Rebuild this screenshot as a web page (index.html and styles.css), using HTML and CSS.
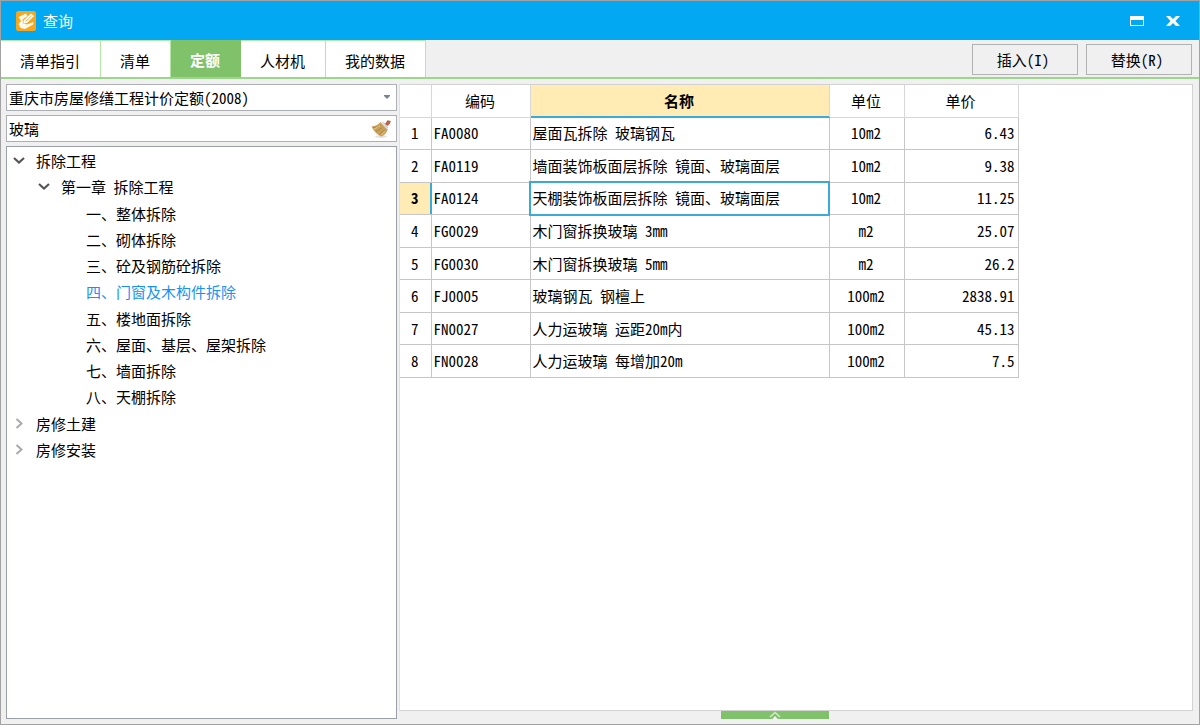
FILE: index.html
```html
<!DOCTYPE html>
<html lang="zh-CN">
<head>
<meta charset="utf-8">
<title>查询</title>
<link rel="stylesheet" href="styles.css">
</head>
<body>
<div class="window">
  <header class="titlebar">
    <svg class="logo" viewBox="0 0 20 20" aria-hidden="true">
      <rect width="20" height="20" rx="2.500" fill="#f9a61c"/>
      <path d="M2.500 6 10 2.500 11.500 5 6.500 8.500 7 12.500 11 13.500 17.500 11 17 13.500 9 18 4.500 17 2.500 13 5 10z" fill="#fffaf0"/>
      <path d="M7.500 9.500 15 2.500 18 5 11 12 7.500 12.500z" fill="#fff"/>
      <path d="M9.500 10.500 15.500 5" stroke="#f3b450" stroke-width="1" fill="none"/>
    </svg>
    <h1 class="title">查询</h1>
    <button class="winbtn" type="button" aria-label="最大化">
      <svg width="16" height="16" viewBox="0 0 16 16"><path d="M1 3h14v10H1zM2 7v5h12V7z" fill="#fff" fill-rule="evenodd"/></svg>
    </button>
    <button class="winbtn" type="button" aria-label="关闭">
      <svg width="16" height="16" viewBox="0 0 16 16"><path d="M1 3h4l3 3 3-3h4L10.500 8l4.500 5h-4L8 10l-3 3H1l4.500-5z" fill="#fff"/></svg>
    </button>
  </header>

  <div class="toolbar">
    <nav class="tabs" role="tablist">
      <button class="tab" role="tab" type="button">清单指引</button>
      <button class="tab" role="tab" type="button">清单</button>
      <button class="tab tab-active" role="tab" type="button" aria-selected="true">定额</button>
      <button class="tab" role="tab" type="button">人材机</button>
      <button class="tab" role="tab" type="button">我的数据</button>
    </nav>
    <div class="actions">
      <button class="action" type="button">插入(I)</button>
      <button class="action" type="button">替换(R)</button>
    </div>
  </div>

  <div class="content">
    <aside class="sidebar">
      <div class="field">
        <select class="control" aria-label="定额库"><option>重庆市房屋修缮工程计价定额(2008)</option></select>
        <svg class="arrow" width="8" height="5" viewBox="0 0 8 5" aria-hidden="true"><path d="M1 0h6v1L4 4 1 1z" fill="#7d8190"/></svg>
      </div>
      <div class="field">
        <input class="control" type="text" value="玻璃" aria-label="搜索">
        <button class="clear" type="button" aria-label="清空">
          <svg width="22" height="20" viewBox="0 0 22 20">
            <ellipse cx="11" cy="17.500" rx="6" ry="1.500" fill="#e2e2e2"/>
            <path d="M15 5 17.500 1.200 20.800 2 20 4.500 17.500 7z" fill="#bd6248"/>
            <path d="M1.500 7.500Q7 7 10.500 3L17.500 11Q16 15.500 11.500 17.500 5 15 1.500 7.500z" fill="#c8a05a"/>
            <path d="M3 8.500 9 8M6 12.500 12 9M9.500 15.500 14.500 11" stroke="#a57f40" stroke-width=".8"/>
            <path d="M4 10 10 7M11 16 15 12.500" stroke="#e4c583" stroke-width="1"/>
            <path d="M11.500 2.500 14 3.500 18 8.500 18 11.500z" fill="#a5b2bb"/>
            <path d="M12.500 3 18 10" stroke="#e4ebef" stroke-width="1"/>
          </svg>
        </button>
      </div>
      <div class="treebox">
        <ul class="tree" role="tree">
          <li class="node level1" role="treeitem" aria-expanded="true"><svg class="chev" viewBox="0 0 12 12"><path d="M1 3 6 7.500l5-4.500" stroke="#555" stroke-width="2.200" fill="none"/></svg>拆除工程</li>
          <li class="node level2" role="treeitem" aria-expanded="true"><svg class="chev" viewBox="0 0 12 12"><path d="M1 3 6 7.500l5-4.500" stroke="#555" stroke-width="2.200" fill="none"/></svg>第一章 拆除工程</li>
          <li class="node level3" role="treeitem">一、整体拆除</li>
          <li class="node level3" role="treeitem">二、砌体拆除</li>
          <li class="node level3" role="treeitem">三、砼及钢筋砼拆除</li>
          <li class="node level3 selected" role="treeitem" aria-selected="true">四、门窗及木构件拆除</li>
          <li class="node level3" role="treeitem">五、楼地面拆除</li>
          <li class="node level3" role="treeitem">六、屋面、基层、屋架拆除</li>
          <li class="node level3" role="treeitem">七、墙面拆除</li>
          <li class="node level3" role="treeitem">八、天棚拆除</li>
          <li class="node level1" role="treeitem" aria-expanded="false"><svg class="chev" viewBox="0 0 12 12"><path d="M3.500 1 8.500 5.500l-5 4.500" stroke="#aaa" stroke-width="2" fill="none"/></svg>房修土建</li>
          <li class="node level1" role="treeitem" aria-expanded="false"><svg class="chev" viewBox="0 0 12 12"><path d="M3.500 1 8.500 5.500l-5 4.500" stroke="#aaa" stroke-width="2" fill="none"/></svg>房修安装</li>
        </ul>
      </div>
    </aside>

    <main class="main">
      <div class="grid">
        <table class="table">
          <colgroup><col class="c-no"><col class="c-code"><col class="c-name"><col class="c-unit"><col class="c-price"></colgroup>
          <thead>
            <tr><th></th><th>编码</th><th class="sorted">名称</th><th>单位</th><th>单价</th></tr>
          </thead>
          <tbody>
            <tr><th>1</th><td>FA0080</td><td>屋面瓦拆除 玻璃钢瓦</td><td class="unit">10m2</td><td class="price">6.43</td></tr>
            <tr><th>2</th><td>FA0119</td><td>墙面装饰板面层拆除 镜面、玻璃面层</td><td class="unit">10m2</td><td class="price">9.38</td></tr>
            <tr><th class="current">3</th><td>FA0124</td><td class="focus">天棚装饰板面层拆除 镜面、玻璃面层</td><td class="unit">10m2</td><td class="price">11.25</td></tr>
            <tr><th>4</th><td>FG0029</td><td>木门窗拆换玻璃 3mm</td><td class="unit">m2</td><td class="price">25.07</td></tr>
            <tr><th>5</th><td>FG0030</td><td>木门窗拆换玻璃 5mm</td><td class="unit">m2</td><td class="price">26.2</td></tr>
            <tr><th>6</th><td>FJ0005</td><td>玻璃钢瓦 钢檀上</td><td class="unit">100m2</td><td class="price">2838.91</td></tr>
            <tr><th>7</th><td>FN0027</td><td>人力运玻璃 运距20m内</td><td class="unit">100m2</td><td class="price">45.13</td></tr>
            <tr><th>8</th><td>FN0028</td><td>人力运玻璃 每增加20m</td><td class="unit">100m2</td><td class="price">7.5</td></tr>
          </tbody>
        </table>
      </div>
      <button class="handle" type="button" aria-label="展开">
        <svg width="12" height="8" viewBox="0 0 12 8"><path d="M1 6 6 1.500 11 6" stroke="#d2ebca" stroke-width="1.500" fill="none"/><path d="M3.500 8 6 5l2.500 3z" fill="#fff"/></svg>
      </button>
    </main>
  </div>
</div>
</body>
</html>
```

FILE: styles.css
```css
* { box-sizing: border-box; }
body {
  margin: 0;
  color: #000;
  font: 15px/20px "Noto Sans Mono CJK SC", "Noto Sans CJK SC", sans-serif;
}
button, input, select { font: inherit; color: inherit; }
.window {
  display: flex;
  flex-direction: column;
  min-height: 100vh;
  background: #f0f0f0;
  border: 1px solid #a2a2a2;
}
.titlebar {
  display: flex;
  align-items: center;
  height: 39px;
  padding: 0 10px 0 15px;
  background: #02a9f2;
  color: #fff;
}
.logo { width: 20px; height: 20px; margin-right: 7px; }
.title { flex: 1; margin: 0; font-size: 15px; font-weight: 400; }
.winbtn {
  display: flex;
  padding: 0 8px;
  margin-left: 4px;
  background: none;
  border: 0;
}
.toolbar {
  display: flex;
  justify-content: space-between;
  border-bottom: 2px solid #9bd68c;
}
.tabs { display: flex; height: 37px; }
.tab {
  padding: 4px 20px 0 19px;
  background: #fff;
  border: 0;
  border-top: 1px solid #b4e6a5;
  border-right: 1px solid #b4e6a5;
}
.tab-active {
  padding-top: 2px;
  background: #7fc269;
  border-color: #7fc269;
  color: #fff;
  font-weight: 700;
}
.actions { display: flex; gap: 8px; padding: 4px 7px 2px 0; }
.action {
  width: 106px;
  height: 31px;
  padding: 0 4px 0 0;
  background: #f0f0f0;
  border: 1px solid #b2b2b2;
}
.content {
  flex: 1;
  display: flex;
  gap: 2px;
  padding: 5px 6px 5px 5px;
}
.sidebar {
  flex: 0 1 391px;
  display: flex;
  flex-direction: column;
  gap: 4px;
}
.field {
  display: flex;
  align-items: center;
  height: 27px;
  background: #fff;
  border: 1px solid #acafb4;
}
.control {
  flex: 1;
  min-width: 0;
  padding: 0 2px;
  appearance: none;
  background: none;
  border: 0;
  outline: 0;
}
.arrow { margin-right: 5px; pointer-events: none; }
.clear { display: flex; padding: 0 4px 0 0; background: none; border: 0; }
.treebox { flex: 1; background: #fff; border: 1px solid #9ba0a8; }
.tree {
  display: grid;
  grid-auto-rows: 1fr;
  min-height: 316px;
  margin: 0;
  padding: 1px 0 0;
  list-style: none;
}
.node { display: flex; align-items: center; white-space: pre; }
.chev { width: 12px; height: 12px; margin-right: 11px; }
.level1 { padding-left: 6px; }
.level2 { padding-left: 31px; }
.level3 { padding-left: 79px; }
.selected { color: #1793f5; }
.main { flex: 1; display: flex; flex-direction: column; }
.grid { flex: 1; background: #fff; border: 1px solid #d2d2d2; border-left-color: #e0e0e0; }
.table {
  table-layout: fixed;
  width: 618px;
  height: 293px;
  border-collapse: collapse;
}
.c-no { width: 31px; }
.c-code { width: 99px; }
.c-name { width: 299px; }
.c-unit { width: 75px; }
.c-price { width: 114px; }
.table th, .table td {
  padding: 0 3px 0 2px;
  border: 1px solid #c6c6c6;
  font-weight: 400;
  white-space: nowrap;
}
.table tr > :first-child { border-left: 0; }
.table thead th { height: 32px; border-top: 0; border-color: #d8d8d8; }
.table td { text-align: left; }
.table .unit { text-align: center; }
.table .price { text-align: right; }
.table .sorted {
  background: #ffebb3;
  box-shadow: inset 0 -1px #3aaad8;
  border-bottom-color: #3aaad8;
  font-weight: 700;
}
.table .current {
  background: #ffebb3;
  box-shadow: inset -1px 0 #3aaad8;
  border-right-color: #3aaad8;
  font-weight: 700;
}
.table .focus { outline: 2px solid #3aaad8; outline-offset: -1px; }
.handle {
  display: flex;
  justify-content: center;
  width: 108px;
  height: 8px;
  margin-left: 40.5%;
  padding: 0;
  background: #80c26a;
  border: 0;
}
```
